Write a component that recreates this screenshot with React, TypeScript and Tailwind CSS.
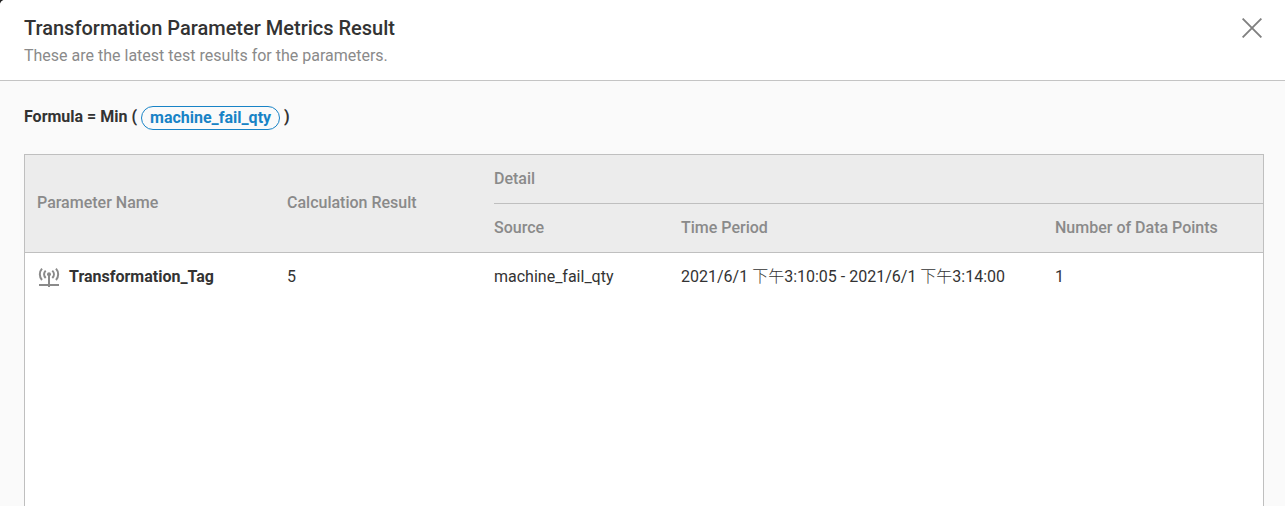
import React from "react";

function CloseIcon() {
  return (
    <svg width="20" height="20" viewBox="0 0 20 20" fill="none" stroke="#808080" strokeWidth="1.9">
      <path d="M0.6 0.6 19.4 19.4M19.4 0.6 0.6 19.4" />
    </svg>
  );
}

function TagIcon() {
  return (
    <svg width="24" height="24" viewBox="0 0 24 24" fill="none" stroke="#8a8a8a" strokeWidth="2">
      <path d="M5 3.6C2.1 6.8 2.1 11.8 5 15M19 3.6C21.9 6.8 21.9 11.8 19 15" />
      <path d="M8.7 5.6C6.5 7.8 6.5 10.8 8.7 13M15.3 5.6C17.5 7.8 17.5 10.8 15.3 13" />
      <path d="M12 9V22M2 20H22" />
      <circle cx="12" cy="9.2" r="2" fill="#8a8a8a" stroke="none" />
    </svg>
  );
}

function Meridiem() {
  return <span className="font-['Noto_Sans_CJK_TC',sans-serif] font-light leading-none">下午</span>;
}

export default function App() {
  return (
    <div className="bg-[#222]">
      <div className="flex h-[506px] flex-col overflow-hidden rounded-tl-[5px] bg-[#fafafa] font-[Roboto,'Noto_Sans_CJK_TC',sans-serif] text-base leading-6 text-[#333]">
        <header className="flex h-[81px] shrink-0 items-start justify-between border-b border-[#c4c4c4] bg-white pr-[23px] pl-6">
          <div className="pt-4">
            <h1 className="text-xl leading-6 font-medium">Transformation Parameter Metrics Result</h1>
            <p className="mt-1 text-[#8a8a8a]">These are the latest test results for the parameters.</p>
          </div>
          <button className="mt-[18px]" aria-label="Close">
            <CloseIcon />
          </button>
        </header>
        <main className="flex min-h-0 flex-1 flex-col px-6 pr-[21px] pt-6">
          <div className="flex h-[25px] shrink-0 items-start font-bold">
            <span>Formula = Min (</span>
            <span className="mx-1 mt-px h-6 rounded-full border border-[#1883c6] px-2 leading-[22px] text-[#1883c6]">
              machine_fail_qty
            </span>
            <span>)</span>
          </div>
          <section className="mt-6 flex min-h-0 flex-1 flex-col border border-b-0 border-[#bfbfbf] bg-white">
            <div className="grid h-[98px] shrink-0 grid-cols-[250px_207px_1fr] border-b border-[#bfbfbf] bg-[#ececec] font-medium text-[#8a8a8a]">
              <div className="flex items-center pb-0.5 pl-3">Parameter Name</div>
              <div className="flex items-center pb-0.5 pl-3">Calculation Result</div>
              <div className="flex flex-col pl-3">
                <div className="flex h-[49px] items-center border-b border-[#bfbfbf]">Detail</div>
                <div className="grid flex-1 grid-cols-[187px_374px_1fr] items-center">
                  <span>Source</span>
                  <span>Time Period</span>
                  <span>Number of Data Points</span>
                </div>
              </div>
            </div>
            <div className="grid h-12 grid-cols-[250px_207px_187px_374px_1fr] items-center *:pl-3">
              <div className="flex items-center gap-2 font-bold">
                <TagIcon />
                <span>Transformation_Tag</span>
              </div>
              <div>5</div>
              <div>machine_fail_qty</div>
              <div className="whitespace-nowrap">
                2021/6/1 <Meridiem />3:10:05 - 2021/6/1 <Meridiem />3:14:00
              </div>
              <div>1</div>
            </div>
          </section>
        </main>
      </div>
    </div>
  );
}
